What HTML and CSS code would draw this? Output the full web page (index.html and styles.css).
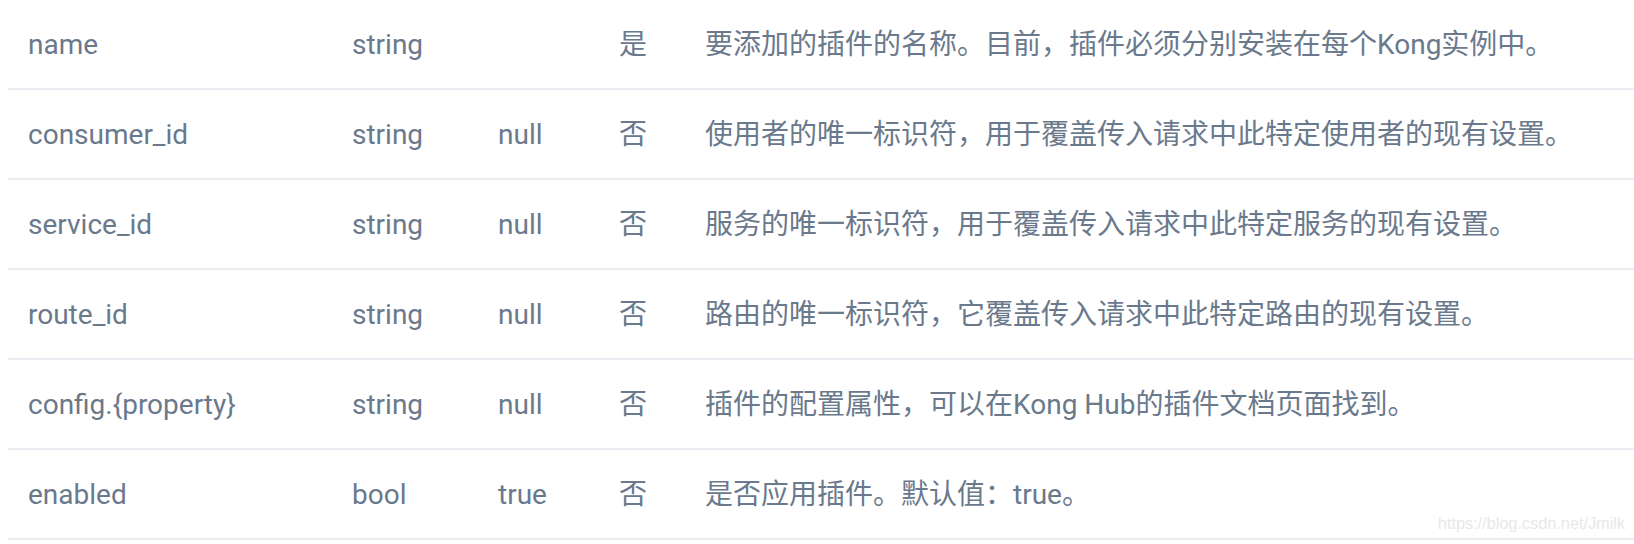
FILE: index.html
```html
<!DOCTYPE html>
<html lang="zh-CN">
<head>
<meta charset="utf-8">
<title>Plugin parameters</title>
<link rel="stylesheet" href="styles.css">
</head>
<body>
<div class="params">
  <div class="row">
    <div class="cell">name</div>
    <div class="cell">string</div>
    <div class="cell"></div>
    <div class="cell">是</div>
    <div class="cell">要添加的插件的名称。目前，插件必须分别安装在每个Kong实例中。</div>
  </div>
  <div class="row">
    <div class="cell">consumer_id</div>
    <div class="cell">string</div>
    <div class="cell">null</div>
    <div class="cell">否</div>
    <div class="cell">使用者的唯一标识符，用于覆盖传入请求中此特定使用者的现有设置。</div>
  </div>
  <div class="row">
    <div class="cell">service_id</div>
    <div class="cell">string</div>
    <div class="cell">null</div>
    <div class="cell">否</div>
    <div class="cell">服务的唯一标识符，用于覆盖传入请求中此特定服务的现有设置。</div>
  </div>
  <div class="row">
    <div class="cell">route_id</div>
    <div class="cell">string</div>
    <div class="cell">null</div>
    <div class="cell">否</div>
    <div class="cell">路由的唯一标识符，它覆盖传入请求中此特定路由的现有设置。</div>
  </div>
  <div class="row">
    <div class="cell">config.{property}</div>
    <div class="cell">string</div>
    <div class="cell">null</div>
    <div class="cell">否</div>
    <div class="cell">插件的配置属性，可以在Kong Hub的插件文档页面找到。</div>
  </div>
  <div class="row">
    <div class="cell">enabled</div>
    <div class="cell">bool</div>
    <div class="cell">true</div>
    <div class="cell">否</div>
    <div class="cell">是否应用插件。默认值：true。</div>
  </div>
  <div class="watermark">https://blog.csdn.net/Jmilk</div>
</div>
</body>
</html>
```

FILE: styles.css
```css
html, body {
  margin: 0;
  padding: 0;
  background: #ffffff;
}

body {
  padding-left: 8px;
  font-family: Roboto, "Noto Sans CJK SC", sans-serif;
  font-size: 28px;
  color: #6a798c;
}

.params {
  position: relative;
}

.row {
  display: grid;
  grid-template-columns: 324px 146px 121px 86px 1fr;
  align-items: center;
  height: 90px;
  box-sizing: border-box;
  border-bottom: 2px solid #ebedf3;
}

.cell {
  padding-left: 20px;
  padding-top: 3px;
  white-space: nowrap;
  line-height: 1.3;
}

.watermark {
  position: absolute;
  right: 9px;
  bottom: 7px;
  font-family: "Liberation Sans", Arial, sans-serif;
  font-size: 16.5px;
  color: #e8e8ea;
  letter-spacing: -0.1px;
}
```
